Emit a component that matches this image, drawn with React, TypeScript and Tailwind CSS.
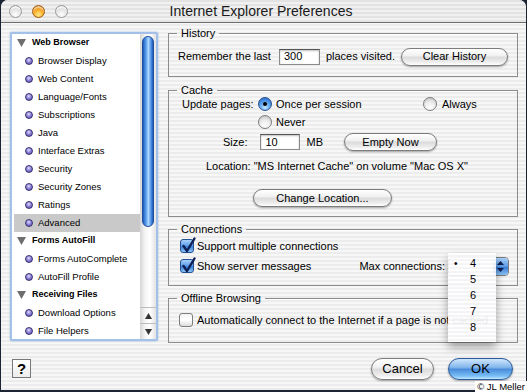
import type { ReactNode } from 'react';

// Mac OS X Aqua style preferences window
const rows = [
  { t: 'Web Browser', h: true },
  { t: 'Browser Display' },
  { t: 'Web Content' },
  { t: 'Language/Fonts' },
  { t: 'Subscriptions' },
  { t: 'Java' },
  { t: 'Interface Extras' },
  { t: 'Security' },
  { t: 'Security Zones' },
  { t: 'Ratings' },
  { t: 'Advanced', sel: true },
  { t: 'Forms AutoFill', h: true },
  { t: 'Forms AutoComplete' },
  { t: 'AutoFill Profile' },
  { t: 'Receiving Files', h: true },
  { t: 'Download Options' },
  { t: 'File Helpers' },
];

const Light = ({ on }: { on?: boolean }) =>
  on ? (
    <span className="block h-[13px] w-[13px] rounded-full border border-[#a35a12] bg-[radial-gradient(circle_at_50%_80%,#ffe98a_0%,#f7a31c_55%,#c45f05_100%)] shadow-[inset_0_2px_1px_rgba(255,255,255,0.6)]" />
  ) : (
    <span className="block h-[13px] w-[13px] rounded-full border border-[#9a9a9a] bg-[radial-gradient(circle_at_50%_80%,#ffffff_0%,#e2e2e2_55%,#b4b4b4_100%)] shadow-[inset_0_2px_1px_rgba(255,255,255,0.8)]" />
  );

const Button = ({ w, children }: { w: string; children: ReactNode }) => (
  <span
    className={`flex h-[18px] ${w} items-center justify-center rounded-full border border-[#7c7c7c] bg-[linear-gradient(180deg,#ffffff_0%,#f2f2f2_40%,#dcdcdc_52%,#ececec_80%,#ffffff_100%)] shadow-[0_1px_2px_rgba(0,0,0,0.35)] text-[11px] leading-none text-black`}
  >
    {children}
  </span>
);

const Radio = ({ on }: { on?: boolean }) =>
  on ? (
    <span className="flex h-[14px] w-[14px] shrink-0 items-center justify-center rounded-full border border-[#24508f] bg-[radial-gradient(circle_at_50%_78%,#c4e6ff_0%,#5fa3ec_45%,#1f5fc4_100%)]">
      <span className="h-[4px] w-[4px] rounded-full bg-black" />
    </span>
  ) : (
    <span className="block h-[14px] w-[14px] shrink-0 rounded-full border border-[#7d7d7d] bg-[radial-gradient(circle_at_50%_80%,#ffffff_0%,#ebebeb_50%,#b9b9b9_100%)]" />
  );

const Check = ({ on }: { on?: boolean }) =>
  on ? (
    <span className="relative block h-[14px] w-[14px] shrink-0 rounded-[3px] border border-[#24508f] bg-[linear-gradient(180deg,#a8d2fb_0%,#5a9ae6_50%,#3b7fd8_55%,#8cc6f7_100%)]">
      <svg className="absolute left-[0px] top-[-3px]" width="15" height="16" viewBox="0 0 15 16">
        <path d="M2.5 9 L6 14 L13.5 1.5" fill="none" stroke="#0d1f55" strokeWidth="2.4" strokeLinecap="round" strokeLinejoin="round" />
      </svg>
    </span>
  ) : (
    <span className="block h-[14px] w-[14px] shrink-0 rounded-[3px] border border-[#7d7d7d] bg-[linear-gradient(180deg,#f4f4f4_0%,#ffffff_50%,#dcdcdc_100%)]" />
  );

const Field = ({ w, v }: { w: string; v: string }) => (
  <span
    className={`flex h-[16px] ${w} items-center border border-[#8a8a8a] border-t-[#555] bg-white pl-[4px] text-[11px] shadow-[inset_0_1px_2px_rgba(0,0,0,0.25)]`}
  >
    {v}
  </span>
);

const Group = ({ title, h, mt, children }: { title: string; h: string; mt: string; children: ReactNode }) => (
  <fieldset className={`${h} ${mt} border border-[#8c8c8c] shadow-[inset_0_1px_0_rgba(255,255,255,0.7)]`}>
    <legend className="ml-[8px] px-[4px] text-[11px] leading-[13px] text-black">{title}</legend>
    {children}
  </fieldset>
);

export default function App() {
  return (
    <div className="relative h-[392px] w-[527px] overflow-hidden bg-[#1c2433] font-['Lucida_Grande','Liberation_Sans',Arial,sans-serif] text-[11px] text-black">
      <div className="ml-[1px] flex h-[390px] w-[525px] flex-col overflow-hidden rounded-t-[7px] bg-[repeating-linear-gradient(180deg,#ececec_0px,#ececec_2px,#f7f7f7_2px,#f7f7f7_4px)]">
        {/* title bar */}
        <div className="grid h-[23px] shrink-0 grid-cols-[75px_1fr_80px] items-center border-b border-[#6e6e6e] bg-[repeating-linear-gradient(180deg,#e3e3e3_0px,#e3e3e3_2px,#f1f1f1_2px,#f1f1f1_4px)]">
          <div className="flex items-center gap-[10px] pl-[8px]">
            <Light />
            <Light on />
            <Light />
          </div>
          <div className="text-center text-[14px] leading-none text-[#1a1a1a]">Internet Explorer Preferences</div>
          <div />
        </div>

        {/* main */}
        <div className="flex items-start">
          {/* sidebar */}
          <div className="ml-[9px] mt-[9px] flex h-[309px] w-[148px] overflow-hidden rounded-[2px] border-2 border-[#a3c1e8] bg-white shadow-[0_0_2px_rgba(80,130,200,0.6)]">
            <div className="w-[128px] overflow-hidden pl-[2px]">
              {rows.map((r) => (
                <div
                  key={r.t}
                  className={`flex h-[18px] items-center whitespace-nowrap ${r.sel ? 'bg-[#c9c9c9]' : ''}`}
                >
                  {r.h ? (
                    <>
                      <svg className="ml-[3px]" width="9" height="8" viewBox="0 0 9 8">
                        <path d="M0 0 L9 0 L4.5 8 Z" fill="#6e6e6e" />
                      </svg>
                      <span className="ml-[6px] text-[9px] font-bold">{r.t}</span>
                    </>
                  ) : (
                    <>
                      <span className="ml-[11px] block h-[8px] w-[8px] rounded-full border border-[#3b3370] bg-[radial-gradient(circle_at_45%_35%,#e4e0ff_0%,#8e84da_45%,#4a3f9e_100%)]" />
                      <span className="ml-[5px] text-[9.5px]">{r.t}</span>
                    </>
                  )}
                </div>
              ))}
            </div>
            {/* scrollbar */}
            <div className="flex w-[16px] flex-col bg-[linear-gradient(90deg,#d5d5d5_0%,#f3f3f3_30%,#ffffff_60%,#e3e3e3_100%)]">
              <div className="mx-auto mt-[2px] h-[191px] w-[12px] rounded-full border border-[#1c4f9c] bg-[linear-gradient(90deg,#1f58b8_0%,#5aa0f0_30%,#b0d8ff_55%,#4c90e6_80%,#2359b5_100%)]" />
              <div className="flex-1" />
              <div className="flex h-[16px] items-center justify-center border-t border-[#bdbdbd]">
                <svg width="7" height="6" viewBox="0 0 7 6">
                  <path d="M3.5 0 L7 6 L0 6 Z" fill="#333" />
                </svg>
              </div>
              <div className="flex h-[16px] items-center justify-center border-t border-[#bdbdbd]">
                <svg width="7" height="6" viewBox="0 0 7 6">
                  <path d="M0 0 L7 0 L3.5 6 Z" fill="#333" />
                </svg>
              </div>
            </div>
          </div>

          {/* right column */}
          <div className="ml-[10px] flex w-[350px] flex-col pt-[4px]">
            <Group title="History" h="h-[50px]" mt="mt-0">
              <div className="mt-[7px] flex h-[19px] items-center whitespace-nowrap pl-[9px] pr-[9px]">
                <span>Remember the last</span>
                <span className="ml-[8px]">
                  <Field w="w-[41px]" v="300" />
                </span>
                <span className="ml-[6px]">places visited.</span>
                <span className="ml-auto">
                  <Button w="w-[107px]">Clear History</Button>
                </span>
              </div>
            </Group>

            <Group title="Cache" h="h-[133px]" mt="mt-[7px]">
              <div className="flex h-[14px] items-center whitespace-nowrap pl-[13px]">
                <span className="w-[76px]">Update pages:</span>
                <span className="flex w-[165px] items-center gap-[4px]">
                  <Radio on />
                  Once per session
                </span>
                <span className="flex items-center gap-[5px]">
                  <Radio />
                  Always
                </span>
              </div>
              <div className="mt-[4px] flex h-[14px] items-center gap-[4px] pl-[89px]">
                <Radio />
                Never
              </div>
              <div className="mt-[4px] flex h-[18px] items-center whitespace-nowrap pl-[54px]">
                <span>Size:</span>
                <span className="ml-[13px]">
                  <Field w="w-[40px]" v="10" />
                </span>
                <span className="ml-[6px]">MB</span>
                <span className="ml-[21px]">
                  <Button w="w-[93px]">Empty Now</Button>
                </span>
              </div>
              <div className="mt-[8px] flex h-[14px] items-center justify-center whitespace-nowrap pr-[12px]">
                Location: "MS Internet Cache" on volume "Mac OS X"
              </div>
              <div className="ml-[84px] mt-[16px]">
                <Button w="w-[139px]">Change Location...</Button>
              </div>
            </Group>

            <Group title="Connections" h="h-[63px]" mt="mt-[6px]">
              <div className="mt-[3px] flex h-[14px] items-center gap-[3px] whitespace-nowrap pl-[11px]">
                <Check on />
                Support multiple connections
              </div>
              <div className="mt-[3px] flex h-[20px] items-center whitespace-nowrap pl-[11px] pr-[8px]">
                <Check on />
                <span className="ml-[3px]">Show server messages</span>
                <span className="ml-auto">Max connections:</span>
                <div className="relative ml-[3px] flex h-[19px] w-[61px] overflow-visible rounded-[4px] border border-[#7a7a7a] bg-white">
                  {/* current value sits under the open menu */}
                  <span className="flex-1" />
                  <span className="flex w-[15px] items-center justify-center rounded-r-[3px] bg-[linear-gradient(180deg,#a9d1fb_0%,#5b9be6_50%,#3a7cd6_55%,#8cc5f6_100%)]">
                    <svg width="7" height="11" viewBox="0 0 7 11">
                      <path d="M3.5 0 L7 4 L0 4 Z M0 7 L7 7 L3.5 11 Z" fill="#0d1f4f" />
                    </svg>
                  </span>
                  {/* open popup menu */}
                  <div className="absolute left-[-1px] top-[-5px] z-10 flex h-[89px] w-[48px] flex-col bg-[repeating-linear-gradient(180deg,rgba(255,255,255,0.93)_0px,rgba(255,255,255,0.93)_2px,rgba(244,244,246,0.93)_2px,rgba(244,244,246,0.93)_4px)] pt-[3px] shadow-[0_5px_9px_rgba(0,0,0,0.35)]">
                    {['4', '5', '6', '7', '8'].map((n, i) => (
                      <div key={n} className="flex h-[16px] items-center">
                        <span className="w-[20px] pl-[6px] text-[10px] leading-none">{i === 0 ? '•' : ''}</span>
                        <span className="ml-[2px] text-[11px]">{n}</span>
                      </div>
                    ))}
                  </div>
                </div>
              </div>
            </Group>

            <Group title="Offline Browsing" h="h-[51px]" mt="mt-[6px]">
              <div className="mt-[8px] flex h-[14px] items-center gap-[4px] whitespace-nowrap pl-[10px]">
                <Check />
                Automatically connect to the Internet if a page is not cached
              </div>
            </Group>
          </div>
        </div>

        {/* bottom buttons */}
        <div className="mt-[14px] flex h-[23px] items-center pl-[11px] pr-[13px]">
          <span className="flex h-[19px] w-[19px] items-center justify-center border border-[#777] bg-[linear-gradient(180deg,#ffffff_0%,#ededed_100%)] text-[15px] font-bold leading-none">
            ?
          </span>
          <span className="ml-auto flex h-[22px] w-[63px] items-center justify-center rounded-full border border-[#7c7c7c] bg-[linear-gradient(180deg,#ffffff_0%,#f2f2f2_40%,#dcdcdc_52%,#ececec_80%,#ffffff_100%)] text-[13px] shadow-[0_1px_2px_rgba(0,0,0,0.35)]">
            Cancel
          </span>
          <span className="ml-[14px] flex h-[22px] w-[65px] items-center justify-center rounded-full border border-[#2d5a98] bg-[linear-gradient(180deg,#cfe6fd_0%,#82b6ec_42%,#4a8cdb_52%,#79bef5_85%,#bfe7ff_100%)] text-[13px] shadow-[0_1px_2px_rgba(0,0,0,0.35)]">
            OK
          </span>
        </div>
      </div>
      <span className="absolute bottom-0 right-0 bg-white px-[2px] text-[9.5px] leading-[11px] text-black">© JL Meller</span>
    </div>
  );
}
